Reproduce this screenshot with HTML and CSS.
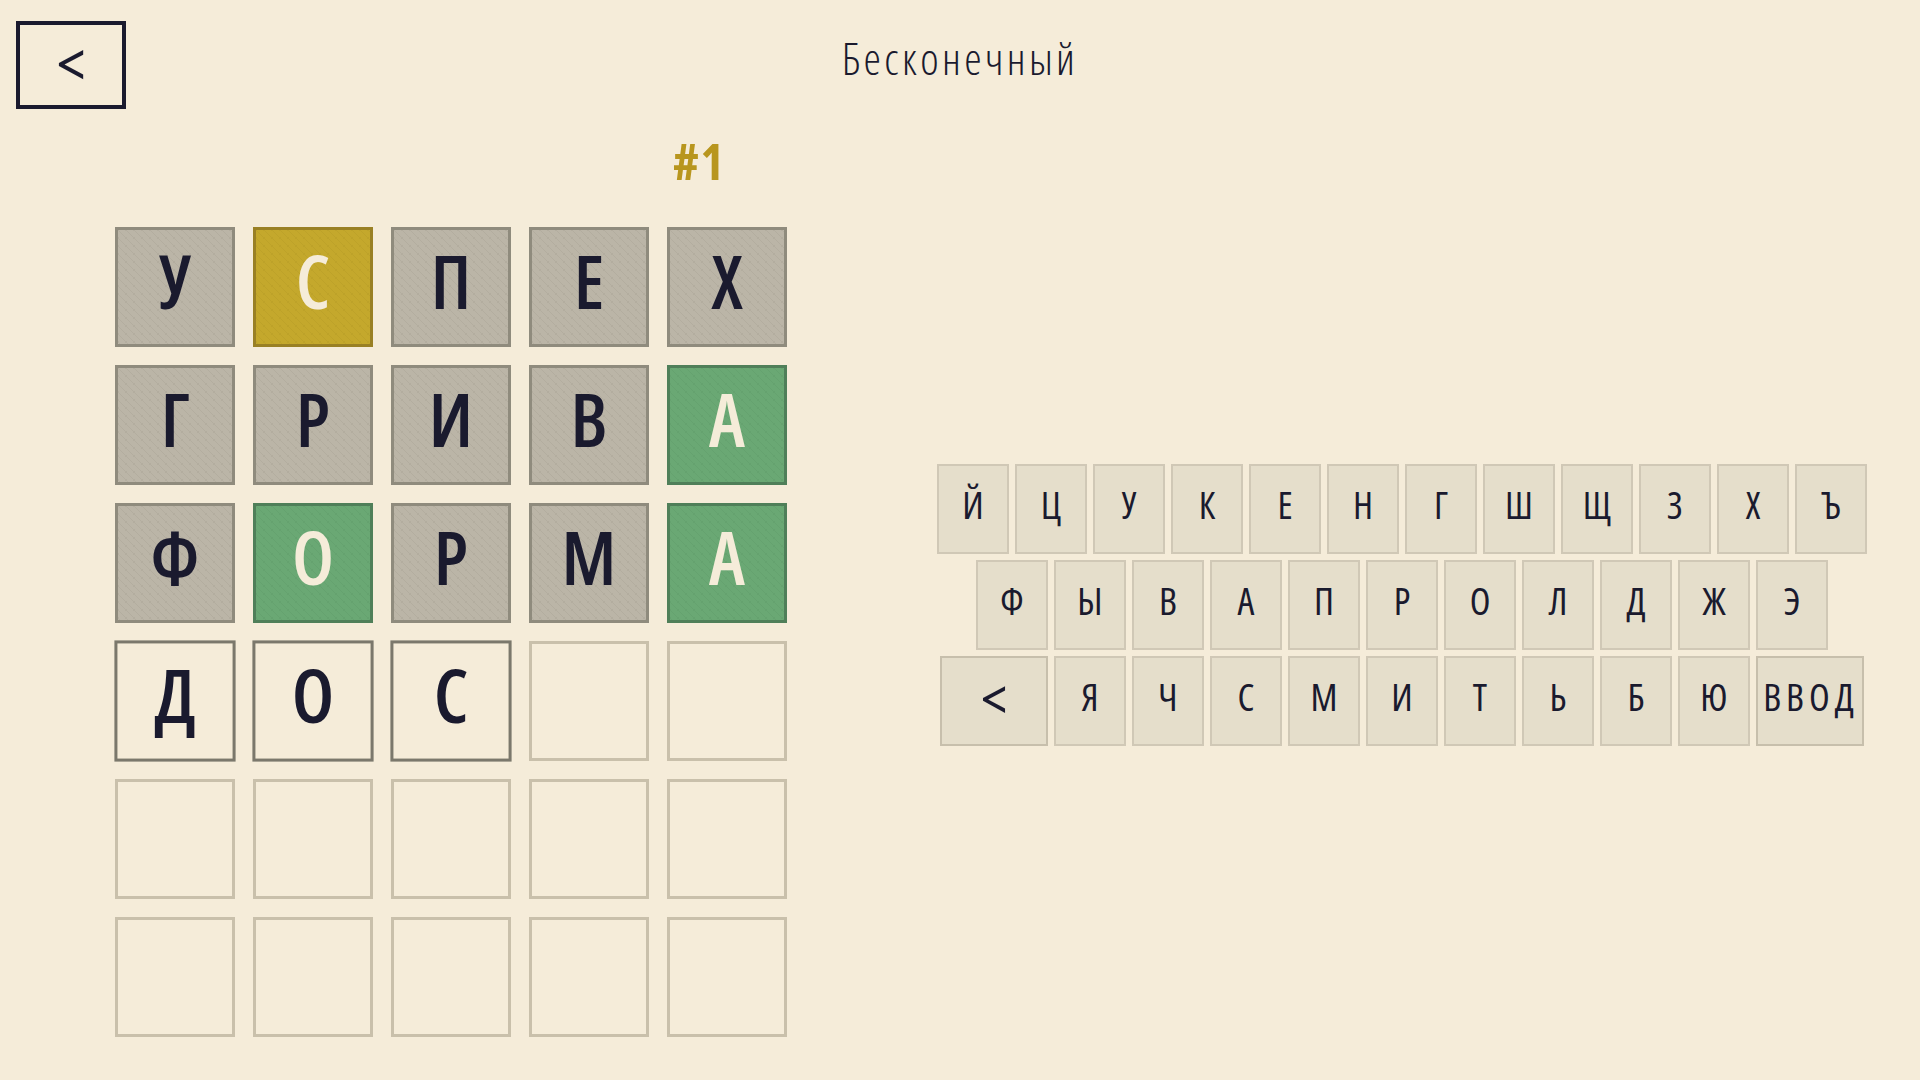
FILE: index.html
```html
<!DOCTYPE html>
<html lang="ru">
<head>
    <meta charset="UTF-8">
    <title>Бесконечный</title>
    <link rel="stylesheet" href="styles.css">
</head>
<body>
    <header class="top-bar">
        <button class="back-btn">&lt;</button>
        <h1 class="mode-title">Бесконечный</h1>
        <div></div>
    </header>
    <main class="game">
        <section class="board-side">
            <p class="round-number">#1</p>
            <div class="board">
                <div class="tile absent">У</div>
                <div class="tile present">С</div>
                <div class="tile absent">П</div>
                <div class="tile absent">Е</div>
                <div class="tile absent">Х</div>

                <div class="tile absent">Г</div>
                <div class="tile absent">Р</div>
                <div class="tile absent">И</div>
                <div class="tile absent">В</div>
                <div class="tile correct">А</div>

                <div class="tile absent">Ф</div>
                <div class="tile correct">О</div>
                <div class="tile absent">Р</div>
                <div class="tile absent">М</div>
                <div class="tile correct">А</div>

                <div class="tile filled">Д</div>
                <div class="tile filled">О</div>
                <div class="tile filled">С</div>
                <div class="tile"></div>
                <div class="tile"></div>

                <div class="tile"></div>
                <div class="tile"></div>
                <div class="tile"></div>
                <div class="tile"></div>
                <div class="tile"></div>

                <div class="tile"></div>
                <div class="tile"></div>
                <div class="tile"></div>
                <div class="tile"></div>
                <div class="tile"></div>
            </div>
        </section>
        <section class="keyboard">
            <div class="key-row">
                <button class="key">Й</button>
                <button class="key">Ц</button>
                <button class="key">У</button>
                <button class="key">К</button>
                <button class="key">Е</button>
                <button class="key">Н</button>
                <button class="key">Г</button>
                <button class="key">Ш</button>
                <button class="key">Щ</button>
                <button class="key">З</button>
                <button class="key">Х</button>
                <button class="key">Ъ</button>
            </div>
            <div class="key-row">
                <button class="key">Ф</button>
                <button class="key">Ы</button>
                <button class="key">В</button>
                <button class="key">А</button>
                <button class="key">П</button>
                <button class="key">Р</button>
                <button class="key">О</button>
                <button class="key">Л</button>
                <button class="key">Д</button>
                <button class="key">Ж</button>
                <button class="key">Э</button>
            </div>
            <div class="key-row">
                <button class="key wide backspace">&lt;</button>
                <button class="key">Я</button>
                <button class="key">Ч</button>
                <button class="key">С</button>
                <button class="key">М</button>
                <button class="key">И</button>
                <button class="key">Т</button>
                <button class="key">Ь</button>
                <button class="key">Б</button>
                <button class="key">Ю</button>
                <button class="key wide enter">ВВОД</button>
            </div>
        </section>
    </main>
</body>
</html>
```

FILE: styles.css
```css
* {
    box-sizing: border-box;
}
body {
    margin: 0;
    height: 1080px;
    overflow: hidden;
    background-color: #f5ecd9;
    color: #1a1a2e;
    font-family: "Open Sans", sans-serif;
    font-stretch: 75%;
}
button {
    font-family: inherit;
    font-stretch: inherit;
    color: inherit;
    cursor: pointer;
}
.top-bar {
    display: grid;
    grid-template-columns: 1fr auto 1fr;
    align-items: start;
    padding: 21px 16px 0;
}
.back-btn {
    width: 110px;
    height: 88px;
    padding: 0 0 6px;
    font-size: 66px;
    font-weight: 400;
    line-height: 1;
    background: none;
    border: 4px solid #1a1a2e;
}
.mode-title {
    margin: 0;
    padding-top: 12px;
    font-size: 44px;
    font-weight: 300;
    line-height: 50px;
    letter-spacing: 3.4px;
}
.game {
    display: flex;
}
.board-side {
    width: 902px;
    padding-left: 115px;
}
.round-number {
    margin: 25px 0 39px;
    padding-left: 558px;
    font-size: 50px;
    font-weight: 700;
    line-height: 54px;
    letter-spacing: 2px;
    color: #b8961e;
}
.board {
    display: grid;
    grid-template-columns: repeat(5, 120px);
    grid-auto-rows: 120px;
    gap: 18px;
}
.tile {
    display: flex;
    align-items: center;
    justify-content: center;
    padding-bottom: 14px;
    font-size: 74px;
    font-weight: 600;
    border: 3px solid #c9c0ab;
}
.filled {
    border-color: #7b786c;
    transform: scale(1.01);
}
.absent, .present, .correct {
    background-size: 8px 8px;
}
.absent {
    border-color: #8f8b7d;
    background-color: #b9b3a5;
    background-image: repeating-linear-gradient(45deg, #b3ad9f 0 1px, #bbb5a7 1px 5px);
}
.present {
    color: #f5ecd9;
    border-color: #998024;
    background-color: #c4a82c;
    background-image: repeating-linear-gradient(45deg, #bda229 0 1px, #c4a82c 1px 5px);
}
.correct {
    color: #f5ecd9;
    border-color: #4f7f59;
    background-color: #6aa874;
    background-image: repeating-linear-gradient(45deg, #65a26f 0 1px, #6aa874 1px 5px);
}
.keyboard {
    display: flex;
    flex-direction: column;
    gap: 6px;
    width: 1000px;
    margin-top: 355px;
}
.key-row {
    display: flex;
    justify-content: center;
    gap: 6px;
}
.key {
    width: 72px;
    height: 90px;
    padding: 0 0 10px;
    font-size: 38px;
    font-weight: 500;
    background-color: #e5decb;
    border: 2px solid #d0c8b6;
}
.wide {
    width: 108px;
    border-color: #c7bfac;
}
.backspace {
    padding-bottom: 6px;
    font-size: 60px;
    font-weight: 400;
    line-height: 1;
}
.enter {
    padding-right: 0;
    padding-left: 2px;
    letter-spacing: 5px;
    white-space: nowrap;
}
```
